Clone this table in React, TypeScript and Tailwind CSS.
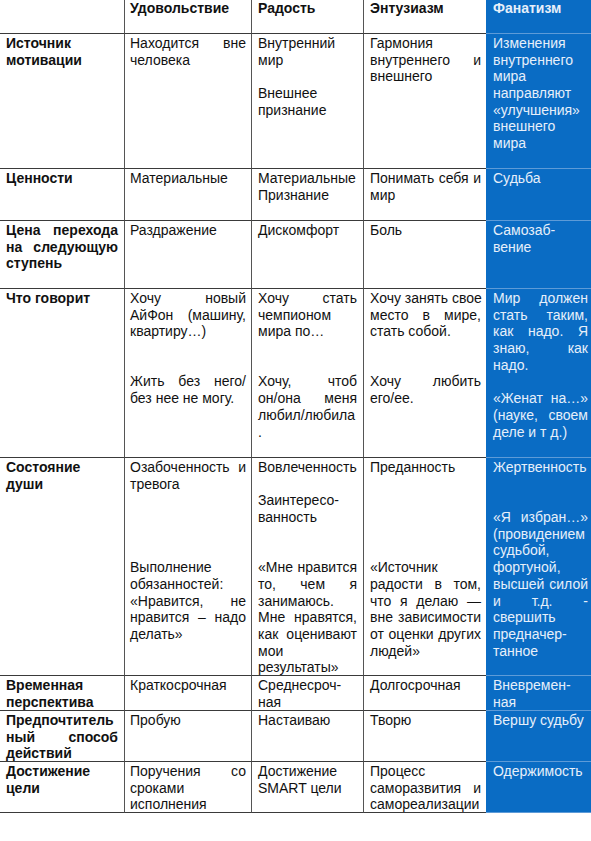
type Cell = string[];
type Row = { h: string; cells: Cell[] };

// "|" at the end of a line marks it as justified across the cell width
const header: Cell[] = [[""], ["Удовольствие"], ["Радость"], ["Энтузиазм"], ["Фанатизм"]];

const rows: Row[] = [
  {
    h: "h-[135px]",
    cells: [
      ["Источник", "мотивации"],
      ["Находится вне|", "человека"],
      ["Внутренний", "мир", "", "Внешнее", "признание"],
      ["Гармония", "внутреннего и|", "внешнего"],
      ["Изменения", "внутреннего", "мира", "направляют", "«улучшения»", "внешнего", "мира"],
    ],
  },
  {
    h: "h-[52px]",
    cells: [["Ценности"], ["Материальные"], ["Материальные", "Признание"], ["Понимать себя и|", "мир"], ["Судьба"]],
  },
  {
    h: "h-[68px]",
    cells: [["Цена перехода|", "на следующую|", "ступень"], ["Раздражение"], ["Дискомфорт"], ["Боль"], ["Самозаб-", "вение"]],
  },
  {
    h: "h-[169px]",
    cells: [
      ["Что говорит"],
      ["Хочу новый|", "АйФон (машину,|", "квартиру…)", "", "", "Жить без него/|", "без нее не могу."],
      ["Хочу стать|", "чемпионом", "мира по…", "", "", "Хочу, чтоб|", "он/она меня|", "любил/любила", "."],
      ["Хочу занять свое|", "место в мире,|", "стать собой.", "", "", "Хочу любить|", "его/ее."],
      ["Мир должен|", "стать таким,|", "как надо. Я|", "знаю, как|", "надо.", "", "«Женат на…»|", "(науке, своем|", "деле и т д.)"],
    ],
  },
  {
    h: "h-[218px]",
    cells: [
      ["Состояние", "души"],
      ["Озабоченность и|", "тревога", "", "", "", "", "Выполнение", "обязанностей:", "«Нравится, не|", "нравится – надо|", "делать»"],
      ["Вовлеченность", "", "Заинтересо-", "ванность", "", "", "«Мне нравится|", "то, чем я|", "занимаюсь.", "Мне нравятся,|", "как оценивают|", "мои", "результаты»"],
      ["Преданность", "", "", "", "", "", "«Источник", "радости в том,|", "что я делаю —|", "вне зависимости|", "от оценки других|", "людей»"],
      ["Жертвенность", "", "", "«Я избран…»|", "(провидением", "судьбой,", "фортуной,", "высшей силой|", "и т.д. -|", "свершить", "предначер-", "танное"],
    ],
  },
  {
    h: "h-[35px]",
    cells: [["Временная", "перспектива"], ["Краткосрочная"], ["Среднесроч-", "ная"], ["Долгосрочная"], ["Вневремен-", "ная"]],
  },
  {
    h: "h-[51px]",
    cells: [["Предпочтитель|", "ный способ|", "действий"], ["Пробую"], ["Настаиваю"], ["Творю"], ["Вершу судьбу"]],
  },
  {
    h: "h-[51px]",
    cells: [["Достижение", "цели"], ["Поручения со|", "сроками", "исполнения"], ["Достижение", "SMART цели"], ["Процесс", "саморазвития и|", "самореализации"], ["Одержимость"]],
  },
];

const colClass = [
  "w-[125px] pl-[6px] pr-[6px] border-r border-[#555] font-bold text-[#111]",
  "w-[127px] pl-[5px] pr-[5px] border-r border-[#555] text-[#111]",
  "w-[112px] pl-[6px] pr-[6px] border-r border-[#555] text-[#111]",
  "w-[122px] pl-[6px] pr-[5px] text-[#111]",
  "w-[105px] pl-[7px] pr-[3px] bg-[#0a6cc4] text-[#e6effa]",
];

function Lines({ lines }: { lines: Cell }) {
  return (
    <>
      {lines.map((l, i) => {
        const just = l.endsWith("|");
        const text = just ? l.slice(0, -1) : l;
        return (
          <div
            key={i}
            className={
              just
                ? "h-[16.7px] whitespace-nowrap text-justify [text-align-last:justify]"
                : "h-[16.7px] whitespace-nowrap"
            }
          >
            {text}
          </div>
        );
      })}
    </>
  );
}

function TableRow({ cells, h, head }: { cells: Cell[]; h: string; head?: boolean }) {
  return (
    <div className={`flex ${h}`}>
      {cells.map((c, i) => (
        <div
          key={i}
          className={`${colClass[i]} ${head ? "font-bold pt-0" : "pt-[1px]"} border-b ${
            i === 4 ? "border-b-[#5d9bd8]" : "border-b-[#3a3a3a]"
          } shrink-0`}
        >
          <Lines lines={c} />
        </div>
      ))}
    </div>
  );
}

export default function App() {
  return (
    <div className="w-[591px] min-h-[841px] bg-white overflow-hidden font-['Liberation_Sans',Arial,sans-serif] text-[14px] leading-[16.7px]">
      <TableRow cells={header} h="h-[34px]" head />
      {rows.map((r, i) => (
        <TableRow key={i} cells={r.cells} h={r.h} />
      ))}
    </div>
  );
}
